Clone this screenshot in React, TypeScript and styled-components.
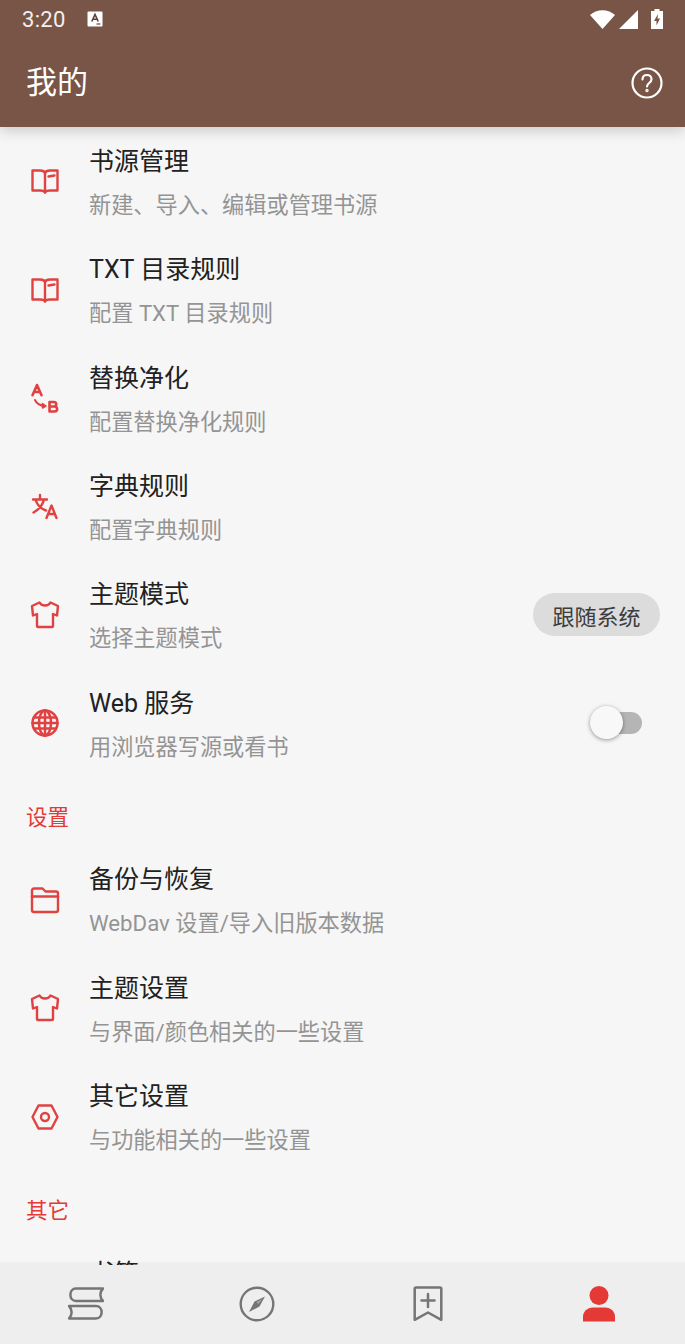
import React from 'react';
import styled, { createGlobalStyle } from 'styled-components';

const RED = '#e53935';
const GREY = '#757575';

const GlobalStyle = createGlobalStyle`
  html, body {
    margin: 0;
    padding: 0;
    background: #f6f6f6;
  }
  * {
    box-sizing: border-box;
  }
`;

const Screen = styled.div`
  width: 685px;
  height: 1344px;
  display: flex;
  flex-direction: column;
  overflow: hidden;
  background: #f6f6f6;
  font-family: Roboto, 'Noto Sans CJK SC', sans-serif;
`;

const Header = styled.header`
  height: 127px;
  flex: none;
  background: #795548;
  color: #fff;
  display: flex;
  flex-direction: column;
  position: relative;
  z-index: 2;
  box-shadow: 0 3px 14px rgba(0, 0, 0, 0.2);
`;

const StatusBar = styled.div`
  height: 38px;
  display: flex;
  align-items: center;
  padding: 0 22px;
`;

const Time = styled.span`
  font-size: 22px;
  letter-spacing: 0.3px;
  color: #f4efec;
`;

const StatusLeft = styled.div`
  display: flex;
  align-items: center;
  gap: 21px;
  flex: 1;
`;

const StatusRight = styled.div`
  display: flex;
  align-items: center;
  gap: 4px;
`;

const BatteryIcon = styled.svg`
  margin-left: 9px;
`;

const Toolbar = styled.div`
  flex: 1;
  display: flex;
  align-items: center;
  justify-content: space-between;
  padding: 0 22px 0 26px;
`;

const Title = styled.h1`
  margin: 0;
  font-size: 31px;
  line-height: 40px;
  font-weight: 400;
`;

const List = styled.main`
  flex: 1;
  min-height: 0;
  margin-bottom: -3px;
  overflow: hidden;
  position: relative;
  z-index: 1;
`;

const Row = styled.div`
  height: 108.45px;
  display: flex;
  align-items: center;
  padding: 2px 25px 0 0;
`;

const IconSlot = styled.div`
  width: 89px;
  flex: none;
  margin-top: -2px;
  display: flex;
  justify-content: center;
  svg {
    display: block;
  }
`;

const RowText = styled.div`
  flex: 1;
  display: flex;
  flex-direction: column;
  gap: 11px;
`;

const RowTitle = styled.div`
  font-size: 25px;
  line-height: 35px;
  color: #212121;
`;

const RowSub = styled.div`
  font-size: 22.2px;
  line-height: 31px;
  min-height: 31px;
  color: #949494;
`;

const Chip = styled.div`
  width: 127px;
  height: 43px;
  margin-top: -2px;
  border-radius: 22px;
  background: #dcdcdc;
  color: #3d3d3d;
  font-size: 22px;
  display: flex;
  align-items: center;
  justify-content: center;
`;

const Switch = styled.div`
  width: 42px;
  height: 22px;
  margin: -2px 18px 0 0;
  border-radius: 11px;
  background: #b5b5b5;
  position: relative;
`;

const SwitchThumb = styled.div`
  position: absolute;
  left: -10px;
  top: -6px;
  width: 33px;
  height: 33px;
  border-radius: 50%;
  background: #f8f8f8;
  box-shadow: 0 1px 4px rgba(0, 0, 0, 0.4);
`;

const Category = styled.div`
  height: 68px;
  padding: 25px 26px 0;
  font-size: 21.5px;
  line-height: 30px;
  color: ${RED};
`;

const BottomBar = styled.nav`
  height: 82px;
  flex: none;
  background: #eeeeee;
  display: grid;
  grid-template-columns: repeat(4, 1fr);
  padding-top: 2px;
`;

const Tab = styled.div`
  display: flex;
  align-items: center;
  justify-content: center;
`;

const Icon = ({ children, sw = 2.4 }: any) => (
  <svg width="32" height="32" viewBox="0 0 32 32" fill="none" stroke="#e04242" strokeWidth={sw} strokeLinejoin="round" strokeLinecap="round">
    {children}
  </svg>
);

const BookIcon = () => (
  <Icon>
    <path d="M3.500 5.500H11c2.500 0 4.500 1 5 2.500.5-1.500 2.500-2.500 5-2.500h7.500V25.500H21c-2.500 0-4.500.5-5 2-.5-1.500-2.500-2-5-2H3.500z" />
    <path d="M16 8v19M19.500 11.500l6-1" />
  </Icon>
);

const SwapIcon = () => (
  <Icon sw={2.6}>
    <path d="M3.500 13.200L8 3l4.500 10.200M5 10h6" />
    <path d="M6 18c1.500 3.500 5 5.500 10 6" strokeWidth="2" />
    <path d="M13.500 21.500l3.500 2.500-3.500 2z" fill="#e04242" strokeWidth="1.500" />
    <path d="M20.500 20v9.500h5c3.500 0 3.500-5 0-5h-5 4.500c3 0 3-4.500 0-4.500z" />
  </Icon>
);

const TranslateIcon = () => (
  <Icon>
    <path d="M4 8.500h14M11 4v4.500M15 8.500c-1.500 6-5 10-10.500 13M6.500 8.500c1.500 5 5 9 10.500 11" />
    <path d="M17.500 27l5-12.500 5 12.500M19.300 23h6.400" />
  </Icon>
);

const ShirtIcon = () => (
  <Icon>
    <path d="M10.500 3.500c1 2 3 3 5.500 3s4.500-1 5.500-3L29 7l-1 9.500-4-1.500v12c0 .6-.4 1-1 1H9c-.6 0-1-.4-1-1V15l-4 1.500L3 7z" />
  </Icon>
);

const GlobeIcon = () => (
  <Icon sw={2.500}>
    <circle cx="16" cy="16" r="12.500" />
    <ellipse cx="16" cy="16" rx="6" ry="12.500" />
    <path d="M16 3.500v25M5 10.500h22M5 21.500h22M3.500 16h25" />
  </Icon>
);

const FolderIcon = () => (
  <Icon>
    <path d="M5 4.500h8.500l3 3H27c1.200 0 2 .8 2 2V26c0 1.200-.8 2-2 2H5c-1.200 0-2-.8-2-2V6.500c0-1.200.8-2 2-2z" />
    <path d="M3 12.500h26" />
  </Icon>
);

const HexIcon = () => (
  <Icon>
    <path d="M9.500 4.500h13L28.500 16l-6 11.500h-13L3.500 16z" />
    <circle cx="16" cy="16" r="4" />
  </Icon>
);

const rows1 = [
  { icon: <BookIcon />, title: '书源管理', sub: '新建、导入、编辑或管理书源' },
  { icon: <BookIcon />, title: 'TXT 目录规则', sub: '配置 TXT 目录规则' },
  { icon: <SwapIcon />, title: '替换净化', sub: '配置替换净化规则' },
  { icon: <TranslateIcon />, title: '字典规则', sub: '配置字典规则' },
  { icon: <ShirtIcon />, title: '主题模式', sub: '选择主题模式', action: <Chip>跟随系统</Chip> },
  {
    icon: <GlobeIcon />,
    title: 'Web 服务',
    sub: '用浏览器写源或看书',
    action: (
      <Switch>
        <SwitchThumb />
      </Switch>
    ),
  },
];

const rows2 = [
  { icon: <FolderIcon />, title: '备份与恢复', sub: 'WebDav 设置/导入旧版本数据' },
  { icon: <ShirtIcon />, title: '主题设置', sub: '与界面/颜色相关的一些设置' },
  { icon: <HexIcon />, title: '其它设置', sub: '与功能相关的一些设置' },
];

const SettingRow = ({ icon, title, sub, action }: any) => (
  <Row>
    <IconSlot>{icon}</IconSlot>
    <RowText>
      <RowTitle>{title}</RowTitle>
      <RowSub>{sub}</RowSub>
    </RowText>
    {action}
  </Row>
);

export default function App() {
  return (
    <Screen>
      <GlobalStyle />
      <Header>
        <StatusBar>
          <StatusLeft>
            <Time>3:20</Time>
            <svg width="16" height="16" viewBox="0 0 16 16">
              <rect x="0.500" y="0.500" width="15" height="15" rx="1" fill="#fff" />
              <path d="M4.800 10.500L8 3.500l3.200 7M6 8.200h4" stroke="#5d4037" strokeWidth="1.600" fill="none" />
              <path d="M9.500 13h4" stroke="#795548" strokeWidth="1.300" />
            </svg>
          </StatusLeft>
          <StatusRight>
            <svg width="25" height="19" viewBox="0 0 25 19">
              <path d="M0 5C3.500 2 7.800.2 12.500.2S21.500 2 25 5L12.500 19z" fill="#fff" />
            </svg>
            <svg width="19" height="19" viewBox="0 0 19 19">
              <path d="M19 0v19H0z" fill="#fff" />
            </svg>
            <BatteryIcon width="12" height="20" viewBox="0 0 12 20">
              <path d="M3.500 0h5v2H12v18H0V2h3.500z" fill="#fff" />
              <path d="M7 5L3 12h2.500v4.500L9 9.500H6.500z" fill="#795548" />
            </BatteryIcon>
          </StatusRight>
        </StatusBar>
        <Toolbar>
          <Title>我的</Title>
          <svg width="32" height="32" viewBox="0 0 32 32" fill="none" stroke="#fff" strokeWidth="2.200" strokeLinecap="round">
            <circle cx="16" cy="16" r="14.500" />
            <path d="M11.500 12.500c0-3 2-4.500 4.500-4.500s4.500 1.700 4.500 4.200c0 3.800-4.500 3.800-4.500 7.300" />
            <circle cx="16" cy="23.500" r="0.600" fill="#fff" />
          </svg>
        </Toolbar>
      </Header>
      <List>
        {rows1.map(r => (
          <SettingRow key={r.title} {...r} />
        ))}
        <Category>设置</Category>
        {rows2.map(r => (
          <SettingRow key={r.title} {...r} />
        ))}
        <Category>其它</Category>
        <SettingRow icon={<BookIcon />} title="书签" sub="" />
      </List>
      <BottomBar>
        <Tab>
          <svg width="36" height="34" viewBox="0 0 36 34" fill="none" stroke={GREY} strokeWidth="2.500" strokeLinejoin="round">
            <path d="M35 1.500H8C.5 1.500.5 14 8 14h27c-3.500-3.500-3.500-9 0-12.500z" />
            <path d="M1 19h27c7.500 0 7.500 12.500 0 12.500H1c3.500-3.500 3.500-9 0-12.500z" />
          </svg>
        </Tab>
        <Tab>
          <svg width="36" height="36" viewBox="0 0 36 36" fill="none" stroke={GREY} strokeWidth="2.400">
            <circle cx="18" cy="18" r="16.300" />
            <path d="M26 10.500L15.500 15.500 20.500 20.500zM10 26l5.500-10.500 5 5z" fill={GREY} stroke="none" />
            <path d="M23.500 13L17.500 16l1.800 2z" fill="#a5a5a5" stroke="none" />
          </svg>
        </Tab>
        <Tab>
          <svg width="30" height="36" viewBox="0 0 30 36" fill="none" stroke={GREY} strokeWidth="2.500" strokeLinejoin="round" strokeLinecap="round">
            <path d="M3 1.500h24c.8 0 1.300.5 1.300 1.300v31L15 26.500 1.700 33.800v-31c0-.8.5-1.300 1.300-1.300z" />
            <path d="M15 8v13M8.500 14.500h13" />
          </svg>
        </Tab>
        <Tab>
          <svg width="32" height="36" viewBox="0 0 32 36" fill={RED}>
            <circle cx="16" cy="9.500" r="9.500" />
            <path d="M0 35.500v-5C0 26 4 21.500 10 21.500h12c6 0 10 4.500 10 9v5z" />
          </svg>
        </Tab>
      </BottomBar>
    </Screen>
  );
}
